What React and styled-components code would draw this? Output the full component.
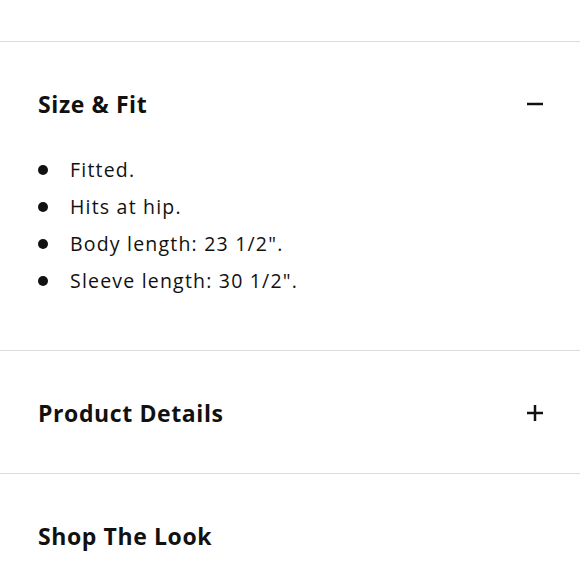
import styled, { createGlobalStyle } from "styled-components";

const GlobalStyle = createGlobalStyle`
  body {
    margin: 0;
    background: #fff;
    font-family: "Open Sans", "Noto Sans", sans-serif;
    color: #111;
  }
`;

const sections = [
  {
    title: "Size & Fit",
    open: true,
    items: ["Fitted.", "Hits at hip.", 'Body length: 23 1/2".', 'Sleeve length: 30 1/2".'],
  },
  { title: "Product Details", open: false },
  { title: "Shop The Look", open: false, noIcon: true },
];

const Icon = ({ open }) => (
  <svg width="16" height="16" viewBox="0 0 16 16">
    <path d="M0 8h16" stroke="#111" strokeWidth="2.5" />
    {!open && <path d="M8 0v16" stroke="#111" strokeWidth="2.5" />}
  </svg>
);

const App = () => {
  return (
    <Page>
      <GlobalStyle />
      {sections.map((s) => (
        <Section key={s.title}>
          <Header open={s.open}>
            <Title>{s.title}</Title>
            {!s.noIcon && <Icon open={s.open} />}
          </Header>
          {s.open && (
            <List>
              {s.items.map((item) => (
                <Item key={item}>
                  <Dot />
                  {item}
                </Item>
              ))}
            </List>
          )}
        </Section>
      ))}
    </Page>
  );
};

const Page = styled.div`
  padding-top: 41px;
  width: 580px;
  height: 580px;
  overflow: hidden;
  box-sizing: border-box;
`;

const Section = styled.div`
  border-top: 1px solid #dcdcdc;
  padding: 0 37px 0 38px;
`;

const Header = styled.div`
  display: flex;
  align-items: center;
  justify-content: space-between;
  padding: 43px 0 ${(p) => (p.open ? "28px" : "41px")};
  height: 38px;
`;

const Title = styled.h3`
  margin: 0;
  font-size: 23px;
  font-weight: 700;
  line-height: 38px;
  letter-spacing: 0.6px;
`;

const List = styled.ul`
  list-style: none;
  margin: 0;
  padding: 0 0 51px;
`;

const Item = styled.li`
  display: flex;
  align-items: center;
  height: 37px;
  font-size: 19.5px;
  letter-spacing: 1.2px;
`;

const Dot = styled.span`
  width: 10px;
  height: 10px;
  border-radius: 50%;
  background: #111;
  margin-right: 22px;
  flex-shrink: 0;
`;

export default App;
